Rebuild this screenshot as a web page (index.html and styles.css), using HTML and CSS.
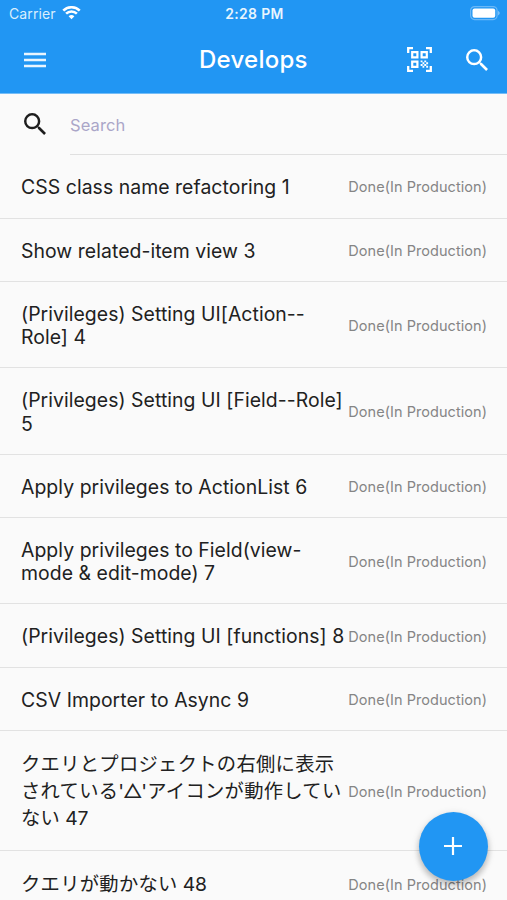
FILE: index.html
```
<!DOCTYPE html>
<html lang="ja">
<head>
<meta charset="utf-8">
<title>Develops</title>
<link rel="stylesheet" href="styles.css">
</head>
<body>
<header class="header">
  <div class="status">
    <div class="carrier"><span>Carrier</span>
      <svg class="wifi" viewBox="0 0 20 15"><path d="M10 14.3 6.9 11a4.5 4.5 0 0 1 6.2 0Z" fill="#fff"/><path d="M4.2 8.2a8.3 8.3 0 0 1 11.6 0M1.2 5a12.5 12.5 0 0 1 17.6 0" fill="none" stroke="#fff" stroke-width="2.8"/></svg>
    </div>
    <time class="time">2:28 PM</time>
    <svg class="battery" viewBox="0 0 30 15"><rect x=".6" y=".6" width="26.5" height="13" rx="4" fill="none" stroke="#6bb8f7" stroke-width="1.2"/><rect x="2.5" y="2.5" width="22.7" height="9.2" rx="2" fill="#fff"/><path d="M28.2 4.7q3 2.4 0 4.8Z" fill="#8bc8fa"/></svg>
  </div>
  <div class="toolbar">
    <svg class="menu" viewBox="0 0 22 16"><path d="M0 1.9h22M0 8h22M0 14.1h22" stroke="#e9f5fe" stroke-width="2.5"/></svg>
    <h1 class="title">Develops</h1>
    <div class="actions">
      <svg class="qr" viewBox="0 0 25 25" fill="none" stroke="#fff"><path d="M1.2 6V1.2H6M19 1.2h4.8V6M23.8 19v4.8H19M6 23.8H1.2V19" stroke-width="2.3"/><path d="M5.2 5.2h5.2v5.2H5.2ZM14.6 5.2h5.2v5.2h-5.2ZM5.2 14.6h5.2v5.2H5.2Z" stroke-width="2.2"/><path d="M13.6 14.4h1.9m1.8 0h1.9M15.5 16.2h1.8m1.9 0h1.9M13.6 18h1.9m1.8 0h1.9M15.5 19.8h1.8m1.9 0h1.9" stroke-width="1.9"/></svg>
      <svg class="glass" viewBox="3 3 17.5 17.5" fill="#fff"><path d="M15.5 14h-.79l-.28-.27A6.47 6.47 0 0 0 16 9.5 6.5 6.5 0 1 0 9.5 16c1.61 0 3.09-.59 4.23-1.57l.27.28v.79l5 4.99L20.49 19zm-6 0C7.01 14 5 11.99 5 9.5S7.01 5 9.5 5 14 7.01 14 9.5 11.99 14 9.5 14"/></svg>
    </div>
  </div>
</header>
<main>
  <div class="search">
    <svg class="glass" viewBox="3 3 17.5 17.5" fill="#1d1d1d"><path d="M15.5 14h-.79l-.28-.27A6.47 6.47 0 0 0 16 9.5 6.5 6.5 0 1 0 9.5 16c1.61 0 3.09-.59 4.23-1.57l.27.28v.79l5 4.99L20.49 19zm-6 0C7.01 14 5 11.99 5 9.5S7.01 5 9.5 5 14 7.01 14 9.5 11.99 14 9.5 14"/></svg>
    <div class="field">Search</div>
  </div>
  <ul class="list">
    <li class="row"><span class="name">CSS class name refactoring 1</span><span class="state">Done(In Production)</span></li>
    <li class="row"><span class="name">Show related-item view 3</span><span class="state">Done(In Production)</span></li>
    <li class="row double"><span class="name">(Privileges) Setting UI[Action--<br>Role] 4</span><span class="state">Done(In Production)</span></li>
    <li class="row double"><span class="name">(Privileges) Setting UI [Field--Role]<br>5</span><span class="state">Done(In Production)</span></li>
    <li class="row"><span class="name">Apply privileges to ActionList 6</span><span class="state">Done(In Production)</span></li>
    <li class="row double"><span class="name">Apply privileges to Field(view-<br>mode &amp; edit-mode) 7</span><span class="state">Done(In Production)</span></li>
    <li class="row"><span class="name">(Privileges) Setting UI [functions] 8</span><span class="state">Done(In Production)</span></li>
    <li class="row"><span class="name">CSV Importer to Async 9</span><span class="state">Done(In Production)</span></li>
    <li class="row triple"><span class="name ja">クエリとプロジェクトの右側に表示<br>されている'△'アイコンが動作してい<br>ない<span class="num"> 47</span></span><span class="state">Done(In Production)</span></li>
    <li class="row last"><span class="name ja">クエリが動かない<span class="num"> 48</span></span><span class="state">Done(In Production)</span></li>
  </ul>
</main>
<button class="fab" aria-label="Add"><svg viewBox="0 0 18 18"><path d="M9 0v18M0 9h18" stroke="#fff" stroke-width="2.2"/></svg></button>
</body>
</html>
```
FILE: styles.css
```
* { box-sizing: border-box; }
html, body { height: 900px; overflow: hidden; }
body {
  margin: 0;
  background: #fafafa;
  color: #212121;
  font-family: Inter, "Noto Sans CJK JP", sans-serif;
}
svg { display: block; flex: none; }
.header { height: 94px; background: #2196f3; color: #fff; border-bottom: 1px solid #75bdf7; }
.status {
  height: 27px;
  padding: 0 7px 0 9px;
  display: grid;
  grid-template-columns: 1fr auto 1fr;
  align-items: center;
}
.carrier { display: flex; align-items: center; gap: 6px; font-size: 14px; letter-spacing: .1px; color: #d9eefd; }
.wifi { width: 19px; height: 14px; margin-top: -1px; }
.time { font-size: 13.9px; font-weight: 600; letter-spacing: .35px; color: #e8f5fe; }
.battery { width: 30px; height: 15px; justify-self: end; }
.toolbar {
  height: 65px;
  padding: 0 19px 0 24px;
  display: grid;
  grid-template-columns: 179px 1fr auto;
  align-items: center;
}
.menu { width: 22px; height: 16px; }
.title { margin: 0 0 0 -4px; font-size: 24px; font-weight: 500; letter-spacing: .25px; }
.actions { display: flex; justify-content: flex-end; align-items: center; gap: 34px; }
.qr { width: 25px; height: 25px; }
.glass { width: 22px; height: 22px; }
.search { height: 61.4px; padding-left: 24px; display: flex; align-items: center; gap: 24px; }
.search .glass { margin-top: -1px; }
.field {
  flex: 1;
  height: 61.4px;
  line-height: 62px;
  border-bottom: 1px solid #e0e0e0;
  color: #aaa6c8;
  font-size: 16.5px;
  letter-spacing: .1px;
}
.list { margin: 0; padding: 0; list-style: none; }
.row {
  height: 63.2px;
  padding: 0 20px 0 21px;
  display: flex;
  justify-content: space-between;
  align-items: center;
  border-bottom: 1px solid #e2e2e2;
}
.double { height: 86.5px; }
.triple { height: 120.6px; }
.last { height: 67px; border: 0; }
.name {
  flex: none;
  width: 327px;
  padding-top: 3px;
  font-size: 19.4px;
  line-height: 23.2px;
  letter-spacing: .06px;
  white-space: nowrap;
}
.ja { padding-top: 1.5px; line-height: 27px; font-size: 19.3px; letter-spacing: .3px; }
.last .ja { padding-top: 0; }
.num { letter-spacing: -.25px; }
.state { padding-top: 1px; font-size: 14.5px; letter-spacing: .05px; color: #858585; white-space: nowrap; }
.last .state { padding-top: 0; }
.fab {
  position: fixed;
  left: 418.5px;
  top: 811.5px;
  width: 69px;
  height: 69px;
  padding: 0;
  border: 0;
  border-radius: 50%;
  background: #2196f3;
  display: grid;
  place-items: center;
  box-shadow: 0 4px 6px rgba(0,0,0,.2), 0 2px 9px rgba(0,0,0,.14);
}
.fab svg { width: 18px; height: 18px; }
```
